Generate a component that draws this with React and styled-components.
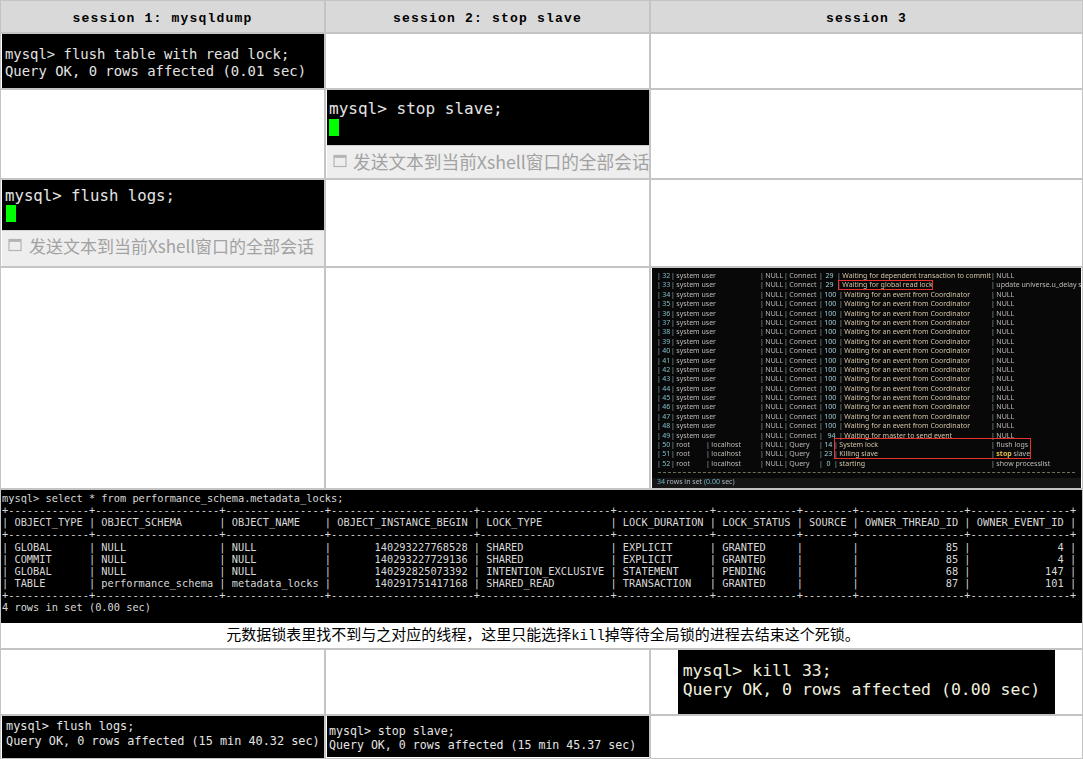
import React from 'react'
import styled, { createGlobalStyle } from 'styled-components'

const GlobalStyle = createGlobalStyle`
    html, body {
        margin: 0;
        padding: 0;
        background: #fff;
    }
`

const Sheet = styled.div`
    display: grid;
    width: 1083px;
    box-sizing: border-box;
    grid-template-columns: 323px 323px 431px;
    grid-template-rows: 31px 54px 88px 86px 220px 158px 64px 42px;
    gap: 2px;
    padding: 1px;
    background: #c4c4c4;
`

const HeadCell = styled.div`
    display: flex;
    align-items: center;
    justify-content: center;
    box-sizing: border-box;
    padding-top: 4px;
    background: #d9d9d9;
    color: #000;
    font: bold 13px "Liberation Mono", monospace;
    letter-spacing: 1.2px;
`

const Cell = styled.div`
    display: flex;
    flex-direction: column;
    background: #fff;
    min-width: 0;
    overflow: hidden;
    padding: ${p => p.$pad || '0'};
    align-items: ${p => p.$center ? 'center' : 'stretch'};
`

const WideCell = styled(Cell)`
    grid-column: 1 / span 3;
`

const Terminal = styled.pre`
    margin: 0;
    flex: 1;
    display: flex;
    flex-direction: column;
    justify-content: ${p => p.$top ? 'flex-start' : 'center'};
    background: #000;
    color: ${p => p.$color || '#e4e4e4'};
    font-family: "DejaVu Sans Mono", monospace;
    font-size: ${p => p.$size}px;
    line-height: ${p => p.$line}px;
    padding: ${p => p.$pad || '0 0 0 3px'};
    white-space: pre;
    overflow: hidden;
`

const Cursor = styled.span`
    display: block;
    width: 10px;
    height: 17px;
    margin-top: ${p => p.$drop}px;
    margin-left: ${p => p.$left}px;
    background: #00ff00;
`

const SendBar = styled.div`
    display: flex;
    align-items: center;
    gap: ${p => p.$gap}px;
    height: ${p => p.$height}px;
    box-sizing: border-box;
    padding-left: ${p => p.$indent}px;
    padding-bottom: ${p => p.$lift}px;
    background: #eeeeee;
    border-top: 1px solid #d2d2d2;
    color: #a2a2a2;
    font-family: "Noto Sans CJK SC", "Noto Sans", sans-serif;
    font-size: ${p => p.$size}px;
    white-space: nowrap;
`

const WindowIcon = styled.svg`
    width: 14px;
    height: 14px;
    flex: none;
`

const ProcessShot = styled.div`
    position: relative;
    height: 100%;
    margin-left: 1px;
    margin-right: 1px;
    background: #080808;
    color: #bcbcb6;
    font-family: "Noto Sans", sans-serif;
    font-size: 7px;
    overflow: hidden;
    filter: blur(0.3px);
`

const ProcessRows = styled.div`
    display: flex;
    flex-direction: column;
    padding-top: 3px;
`

const ProcessRow = styled.div`
    display: grid;
    grid-template-columns: 5px 14px ${p => p.$root ? '35px 54px' : '45px 44px'} 24px 35px ${p => 20 + p.$shift}px ${p => 152 - p.$shift}px 1fr;
    height: 9.4px;
    line-height: 9.4px;
    white-space: nowrap;
`

const ProcCell = styled.span`
    text-align: ${p => p.$right ? 'right' : 'left'};
    color: ${p => p.$color || 'inherit'};
    padding-right: ${p => p.$right ? '3.5px' : '0'};

    &::before {
        content: "|";
        color: #8fb0b5;
        margin-right: 1.5px;
        float: ${p => p.$right ? 'left' : 'none'};
    }
`

const StopWord = styled.b`
    color: #e5c04a;
`

const RedBox = styled.div`
    position: absolute;
    box-sizing: border-box;
    left: ${p => p.$x}px;
    top: ${p => p.$y}px;
    width: ${p => p.$w}px;
    height: ${p => p.$h}px;
    border: 1px solid #e8322f;
`

const DashLine = styled.div`
    margin: 4px 6px 0 6px;
    border-top: 1px dashed #6f6f58;
`

const ShotFooter = styled.div`
    position: absolute;
    left: 0;
    right: 0;
    bottom: 0;
    height: 10px;
    line-height: 7px;
    background: #161616;
    padding-left: 5px;
    color: #a9b6bb;
`

const Teal = styled.span`
    color: #6fb4c4;
`

const Caption = styled.div`
    height: 25px;
    line-height: 21px;
    padding-left: 3px;
    text-align: center;
    color: #000;
    font-family: "Noto Sans CJK SC", sans-serif;
    font-size: 15px;
    white-space: nowrap;
`

const CaptionMono = styled.span`
    font-family: "Liberation Mono", monospace;
    font-size: 14px;
`

const procRows = [
    [32, 'system user', '', 29, 'Waiting for dependent transaction to commit', 'NULL', -2],
    [33, 'system user', '', 29, 'Waiting for global read lock', 'update universe.u_delay se', -2],
    ...[34, 35, 36, 37, 38, 39, 40, 41, 42, 43, 44, 45, 46, 47, 48].map(id => (
        [id, 'system user', '', 100, 'Waiting for an event from Coordinator', 'NULL', 0]
    )),
    [49, 'system user', '', 94, 'Waiting for master to send event', 'NULL', 0],
    [50, 'root', 'localhost', 14, 'System lock', 'flush logs', -5],
    [51, 'root', 'localhost', 23, 'Killing slave', 'stop', -5],
    [52, 'root', 'localhost', 0, 'starting', 'show processlist', -5],
]

const metadataLocks = `mysql> select * from performance_schema.metadata_locks;
+-------------+--------------------+----------------+-----------------------+---------------------+---------------+-------------+--------+-----------------+----------------+
| OBJECT_TYPE | OBJECT_SCHEMA      | OBJECT_NAME    | OBJECT_INSTANCE_BEGIN | LOCK_TYPE           | LOCK_DURATION | LOCK_STATUS | SOURCE | OWNER_THREAD_ID | OWNER_EVENT_ID |
+-------------+--------------------+----------------+-----------------------+---------------------+---------------+-------------+--------+-----------------+----------------+
| GLOBAL      | NULL               | NULL           |       140293227768528 | SHARED              | EXPLICIT      | GRANTED     |        |              85 |              4 |
| COMMIT      | NULL               | NULL           |       140293227729136 | SHARED              | EXPLICIT      | GRANTED     |        |              85 |              4 |
| GLOBAL      | NULL               | NULL           |       140292825073392 | INTENTION_EXCLUSIVE | STATEMENT     | PENDING     |        |              68 |            147 |
| TABLE       | performance_schema | metadata_locks |       140291751417168 | SHARED_READ         | TRANSACTION   | GRANTED     |        |              87 |            101 |
+-------------+--------------------+----------------+-----------------------+---------------------+---------------+-------------+--------+-----------------+----------------+
4 rows in set (0.00 sec)`

function SendToAll({ height, indent, size, gap, lift }) {
    return (
        <SendBar $height={height} $indent={indent} $size={size} $gap={gap} $lift={lift}>
            <WindowIcon viewBox="0 0 14 14">
                <rect x="1" y="1.5" width="12" height="11" fill="none" stroke="#b4b4b4" strokeWidth="1.2" />
                <rect x="1" y="1.5" width="12" height="2.4" fill="#b4b4b4" />
            </WindowIcon>
            发送文本到当前Xshell窗口的全部会话
        </SendBar>
    )
}

function ProcessList() {
    return (
        <ProcessShot>
            <ProcessRows>
                {procRows.map(([id, user, host, time, state, info, shift]) => (
                    <ProcessRow key={id} $shift={shift} $root={user === 'root'}>
                        <span />
                        <ProcCell $color="#7fc0cc">{id}</ProcCell>
                        <ProcCell>{user}</ProcCell>
                        {host ? <ProcCell>{host}</ProcCell> : <span />}
                        <ProcCell>NULL</ProcCell>
                        <ProcCell>{user === 'root' ? 'Query' : 'Connect'}</ProcCell>
                        <ProcCell $right $color="#9fd0d8">{time}</ProcCell>
                        <ProcCell $color="#d2c4a6">{state}</ProcCell>
                        <ProcCell>
                            {info === 'stop' ? <><StopWord>stop</StopWord> slave</> : info}
                        </ProcCell>
                    </ProcessRow>
                ))}
            </ProcessRows>
            <DashLine />
            <RedBox $x={186} $y={12} $w={95} $h={10} />
            <RedBox $x={182} $y={170} $w={197} $h={21} />
            <ShotFooter><Teal>34</Teal> rows in set <Teal>(0.00</Teal> sec)</ShotFooter>
        </ProcessShot>
    )
}

export default function App() {
    return (
        <>
            <GlobalStyle />
            <Sheet>
                <HeadCell>session 1: mysqldump</HeadCell>
                <HeadCell>session 2: stop slave</HeadCell>
                <HeadCell>session 3</HeadCell>

                <Cell $pad="0 0 0 1px">
                    <Terminal $size={13.9} $line={17} $pad="4px 0 0 3px">{'mysql> flush table with read lock;\nQuery OK, 0 rows affected (0.01 sec)'}</Terminal>
                </Cell>
                <Cell />
                <Cell />

                <Cell />
                <Cell $pad="0 0 0 1px">
                    <Terminal $top $size={16.05} $line={20} $pad="9px 0 0 2px">
                        mysql&gt; stop slave;
                        <Cursor $left={0} $drop={0} />
                    </Terminal>
                    <SendToAll height={33} indent={6} size={17.7} gap={6} lift={3} />
                </Cell>
                <Cell />

                <Cell $pad="0 0 0 1px">
                    <Terminal $top $size={15.7} $line={20} $pad="6px 0 0 3px">
                        mysql&gt; flush logs;
                        <Cursor $left={1} $drop={-1} />
                    </Terminal>
                    <SendToAll height={36} indent={6} size={17} gap={7} lift={7} />
                </Cell>
                <Cell />
                <Cell />

                <Cell />
                <Cell />
                <Cell><ProcessList /></Cell>

                <WideCell>
                    <Terminal $top $size={10.32} $line={12.15} $pad="2px 0 0 1px" $color="#d8d8d8">{metadataLocks}</Terminal>
                    <Caption>元数据锁表里找不到与之对应的线程，这里只能选择<CaptionMono>kill</CaptionMono>掉等待全局锁的进程去结束这个死锁。</Caption>
                </WideCell>

                <Cell />
                <Cell />
                <Cell $center>
                    <Terminal $size={16.5} $line={19} $pad="0 15px 4px 5px" $color="#efefdf">{'mysql> kill 33;\nQuery OK, 0 rows affected (0.00 sec)'}</Terminal>
                </Cell>

                <Cell $pad="0 0 0 1px">
                    <Terminal $size={11.85} $line={15} $pad="0 0 6px 4px">{'mysql> flush logs;\nQuery OK, 0 rows affected (15 min 40.32 sec)'}</Terminal>
                </Cell>
                <Cell $pad="0 0 1px 1px">
                    <Terminal $size={11.6} $line={14} $pad="2px 0 0 2px">{'mysql> stop slave;\nQuery OK, 0 rows affected (15 min 45.37 sec)'}</Terminal>
                </Cell>
                <Cell />
            </Sheet>
        </>
    )
}
